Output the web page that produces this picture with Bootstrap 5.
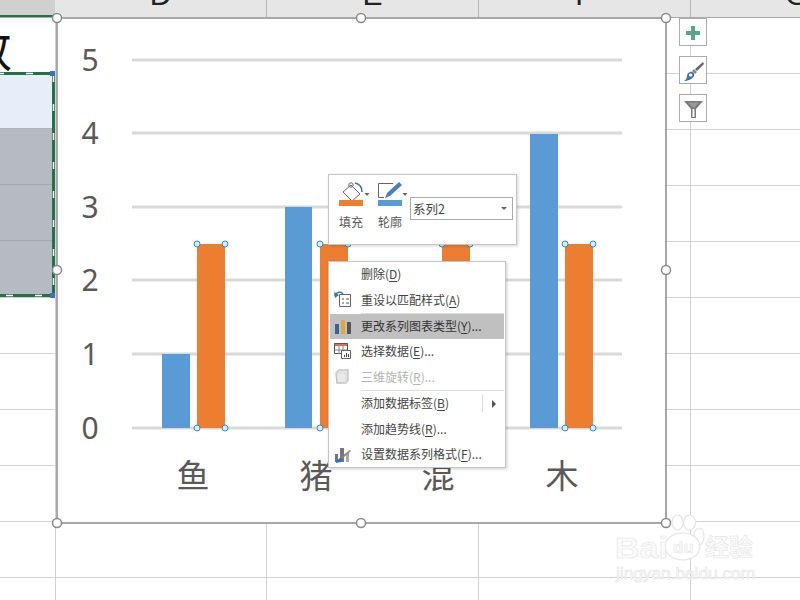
<!DOCTYPE html>
<html lang="zh">
<head>
<meta charset="utf-8">
<title>图表</title>
<link href="https://cdn.jsdelivr.net/npm/bootstrap@5.3.0/dist/css/bootstrap.min.css" rel="stylesheet">
<style>
html,body{margin:0;padding:0;width:800px;height:600px;overflow:hidden;background:#fff;}
body{font-family:"Noto Sans","Noto Sans CJK SC",sans-serif;color:#444;}
.xl-app{position:relative;width:800px;height:600px;overflow:hidden;}
.xl-head{height:18px;background:#e6e6e6;border-bottom:1px solid #ababab;overflow:hidden;}
.xl-col{height:17px;border-right:1px solid #b5b5b5;text-align:center;font:30px/30px "Liberation Sans",sans-serif;color:#222;flex:none;}
.xl-col span{display:block;margin-top:-20px;}
.xl-corner{width:55px;background:#d0d0d0;border-bottom:2px solid #217346;border-right:0;}
.w-a{width:212px}.w-b{width:212px}.w-c{width:212px}.w-d{width:212px;border-right:0;}
.xl-sheet{position:relative;height:582px;}
.xl-grid{position:absolute;left:0;top:0;}
.xl-left{position:relative;width:55px;flex:none;}
.xl-cell{height:56px;border-bottom:1px solid #c9c9c9;overflow:hidden;position:relative;}
.xl-title{height:55px;background:#fff;border-bottom:0;}
.xl-title span{display:block;width:50px;margin-left:-36px;font:48px/48px "Noto Sans CJK SC",sans-serif;color:#111;margin-top:4px;}
.xl-blue{background:#e6eef9;border-bottom-color:#b0b3b8;}
.xl-gray{background:#b6bac2;border-bottom-color:#a5a8ad;}
.xl-march{position:absolute;left:-3px;top:54px;width:57px;height:225px;overflow:visible;}
.xl-chart{position:absolute;left:0;top:0;}
.xl-chart text{font-family:"Noto Sans","Noto Sans CJK SC",sans-serif;fill:#595959;}
.xl-side{position:absolute;left:679px;top:18px;gap:10px;}
.xl-sbtn{width:28px;height:28px;background:#fff;border:1px solid #ababab;}
.xl-mini{position:absolute;left:328px;top:174px;width:189px;height:71px;background:#fff;border:1px solid #c6c6c6;box-shadow:1px 1px 3px rgba(0,0,0,.18);padding:6px 0 0 10px;font:12px/14px "Noto Sans CJK SC",sans-serif;color:#555;}
.xl-tool{width:39px;flex:none;}
.xl-tool svg{display:block;}
.xl-tool div{padding-top:8px;}
.xl-select{width:103px;height:23px;border:1px solid #ababab;margin:16px 0 0 -7px;padding:0 0 0 2px;font-size:12.5px;line-height:21px;color:#444;flex:none;}
.xl-caret{width:0;height:0;border-left:3px solid transparent;border-right:3px solid transparent;border-top:3px solid #666;margin-right:5px;}
.xl-menu{position:absolute;left:328px;top:261px;width:178px;height:207px;background:#fff;border:1px solid #c6c6c6;box-shadow:1px 1px 3px rgba(0,0,0,.2);padding:0 1px 0 1px;font:12px/16px "Noto Sans CJK SC",sans-serif;color:#444;}
.xl-item{height:25.4px;padding-left:31px;padding-bottom:1px;position:relative;white-space:nowrap;}
.xl-item u{text-underline-offset:2px;}
.xl-on{background:#c0c0c0;color:#333;}
.xl-off{color:#b4b4b4;}
.xl-ico{position:absolute;left:4px;top:3px;}
.xl-sep{height:1px;background:#dcdcdc;margin:0 0 0 31px;}
.xl-sub{position:absolute;left:152px;top:4px;height:17px;border-left:1px solid #dcdcdc;}
.xl-arrow{position:absolute;left:162px;top:9px;width:0;height:0;border-top:4px solid transparent;border-bottom:4px solid transparent;border-left:4px solid #555;}
.xl-wm{position:absolute;left:612px;top:512px;}
.xl-wm text{fill:#fafafa;stroke:#e6e6e6;stroke-width:.6;}
</style>
</head>
<body>
<div class="xl-app">
  <div class="xl-head d-flex">
    <div class="xl-col xl-corner"></div>
    <div class="xl-col w-a"><span>D</span></div>
    <div class="xl-col w-b"><span>E</span></div>
    <div class="xl-col w-c"><span>F</span></div>
    <div class="xl-col w-d"><span>G</span></div>
  </div>
  <div class="xl-sheet d-flex">
    <svg class="xl-grid" width="800" height="582" stroke="#d2d2d2" stroke-width="1">
      <path d="M55.500 0V582M266.500 0V582M478.500 0V582M690.500 0V582M0 55.500H800M0 111.500H800M0 167.500H800M0 223.500H800M0 279.500H800M0 335.500H800M0 391.500H800M0 447.500H800M0 503.500H800M0 559.500H800" fill="none"/>
    </svg>
    <div class="xl-left">
      <div class="xl-cell xl-title"><span>数</span></div>
      <div class="xl-cell xl-blue"></div>
      <div class="xl-cell xl-gray"></div>
      <div class="xl-cell xl-gray"></div>
      <div class="xl-cell xl-gray"></div>
      <svg class="xl-march" viewBox="0 0 57 225">
        <path d="M0 1.500H56.500V223.500H0" fill="none" stroke="#217346" stroke-width="3"/>
        <path d="M0 1.500H56.500V223.500H0" fill="none" stroke="#fff" stroke-width="1.500" stroke-dasharray="7 22"/>
        <rect x="53" y="-1" width="5" height="5" fill="#3f6fc0"/>
        <rect x="53" y="221" width="5" height="5" fill="#3f6fc0"/>
      </svg>
    </div>
  </div>

  <svg class="xl-chart" width="800" height="600" viewBox="0 0 800 600">
    <rect x="57" y="18" width="609" height="505" fill="#fff" stroke="#a8a8a8" stroke-width="2"/>
    <g stroke="#d9d9d9" stroke-width="3">
      <path d="M132 60H622M132 133H622M132 207H622M132 280H622M132 354H622M132 428H622"/>
    </g>
    <g font-size="30" text-anchor="middle">
      <text x="90" y="71">5</text><text x="90" y="144">4</text><text x="90" y="218">3</text><text x="90" y="291">2</text><text x="90" y="365">1</text><text x="90" y="439">0</text>
    </g>
    <g font-size="33" text-anchor="middle">
      <text x="193" y="488">鱼</text><text x="316" y="488">猪</text><text x="438" y="488">混</text><text x="562" y="488">木</text>
    </g>
    <g fill="#5b9bd5">
      <rect x="162" y="354" width="28" height="74"/><rect x="285" y="207" width="27" height="221"/><rect x="530" y="134" width="28" height="294"/>
    </g>
    <g fill="#ed7d31">
      <rect x="197" y="244" width="28" height="184"/><rect x="320" y="244" width="28" height="184"/><rect x="442" y="244" width="28" height="184"/><rect x="565" y="244" width="28" height="184"/>
    </g>
    <g fill="#d6ecfa" stroke="#2e8bc9" stroke-width="1">
      <circle cx="197" cy="244" r="3"/><circle cx="225" cy="244" r="3"/><circle cx="197" cy="428" r="3"/><circle cx="225" cy="428" r="3"/>
      <circle cx="320" cy="244" r="3"/><circle cx="348" cy="244" r="3"/><circle cx="320" cy="428" r="3"/>
      <circle cx="442" cy="244" r="3"/><circle cx="470" cy="244" r="3"/>
      <circle cx="565" cy="244" r="3"/><circle cx="593" cy="244" r="3"/><circle cx="565" cy="428" r="3"/><circle cx="593" cy="428" r="3"/>
    </g>
    <g fill="#fff" stroke="#8a8a8a" stroke-width="1.500">
      <circle cx="57" cy="18" r="4.500"/><circle cx="361" cy="18" r="4.500"/><circle cx="666" cy="18" r="4.500"/>
      <circle cx="57" cy="270" r="4.500"/><circle cx="666" cy="270" r="4.500"/>
      <circle cx="57" cy="523" r="4.500"/><circle cx="361" cy="523" r="4.500"/><circle cx="666" cy="523" r="4.500"/>
    </g>
  </svg>

  <div class="xl-side d-flex flex-column">
    <div class="xl-sbtn"><svg width="26" height="26" viewBox="0 0 26 26"><path d="M11 6h4v5h5v4h-5v5h-4v-5H6v-4h5z" fill="#5da58a"/></svg></div>
    <div class="xl-sbtn"><svg width="26" height="26" viewBox="0 0 26 26"><path d="M23 4l1 2-7 7-2-2z" fill="#666"/><path d="M14 11l3 3-2 2-3-3z" fill="#888"/><path d="M10 14c3-1 5 2 4 4-1 3-7 5-10 5 2-1 3-3 3-5 0-2 1-3 3-4z" fill="#3f6fb5"/><path d="M10 15.500c2-.5 3 1 2 2.500-1 1-3 .5-3-.5 0-1 0-1.500 1-2z" fill="#fff"/></svg></div>
    <div class="xl-sbtn"><svg width="26" height="26" viewBox="0 0 26 26"><path d="M4 5h19l-7 8v9h-5v-9z" fill="#7a7a7a"/><path d="M8 6.500h11l-4.500 5h-2z" fill="#9a9a9a"/><path d="M12.500 13h2v8h-2z" fill="#fff"/></svg></div>
  </div>

  <div class="xl-mini d-flex">
    <div class="xl-tool">
      <svg width="36" height="26" viewBox="0 0 36 26"><path d="M12 4l9 9-8 7-9-9z" fill="#fff" stroke="#666" stroke-width="1"/><circle cx="12" cy="4" r="2.200" fill="none" stroke="#666"/><path d="M16 2c4 1 7 4 7 9" fill="none" stroke="#3d6fa8" stroke-width="1.500"/><path d="M25.500 12h5l-2.500 3z" fill="#666"/><rect x="0" y="19" width="24" height="6" fill="#ed7d31"/></svg>
      <div>填充</div>
    </div>
    <div class="xl-tool">
      <svg width="36" height="26" viewBox="0 0 36 26"><path d="M0.500 16.500V2.500H15M0.500 16.500H6" fill="none" stroke="#666"/><path d="M21 1l3 3-12 11-5 2 2-5z" fill="#4a80bb"/><path d="M24.500 12h5l-2.500 3z" fill="#666"/><rect x="0" y="19" width="24" height="6" fill="#5b9bd5"/></svg>
      <div>轮廓</div>
    </div>
    <div class="xl-select d-flex align-items-center justify-content-between"><span>系列2</span><i class="xl-caret"></i></div>
  </div>

  <div class="xl-menu">
    <div class="xl-item d-flex align-items-center">删除(<u>D</u>)</div>
    <div class="xl-item d-flex align-items-center">
      <svg class="xl-ico" width="18" height="18" viewBox="0 0 18 18"><path d="M5.500 4.500H16.500V16.500H5.500z" fill="#fff" stroke="#666"/><path d="M8 9h2M8 13h2M12 9h3M12 13h3" stroke="#555"/><path d="M1 6c1-4 6-5 8-2" fill="none" stroke="#2e75b6" stroke-width="1.500"/><path d="M0 2l1 6 4-3z" fill="#2e75b6"/></svg>
      重设以匹配样式(<u>A</u>)
    </div>
    <div class="xl-sep"></div>
    <div class="xl-item xl-on d-flex align-items-center">
      <svg class="xl-ico" width="18" height="18" viewBox="0 0 18 18"><rect x="1" y="7" width="4" height="10" fill="#31659c"/><rect x="7" y="3" width="4" height="14" fill="#e8a33d"/><rect x="13" y="5" width="4" height="12" fill="#555"/></svg>
      更改系列图表类型(<u>Y</u>)...
    </div>
    <div class="xl-item d-flex align-items-center">
      <svg class="xl-ico" width="18" height="18" viewBox="0 0 18 18"><path d="M0.500 1.500h13v10H0.500z" fill="#fff" stroke="#555"/><path d="M1 2h12v2H1z" fill="#c77a55"/><path d="M5 4v8M9 4v8M1 8h12" stroke="#888"/><path d="M7.500 8.500h9v8h-9z" fill="#fff" stroke="#666"/><path d="M10.500 15v-2M12.500 15v-4M14.500 15v-3" stroke="#444"/></svg>
      选择数据(<u>E</u>)...
    </div>
    <div class="xl-item xl-off d-flex align-items-center">
      <svg class="xl-ico" width="18" height="18" viewBox="0 0 18 18"><path d="M2 5l3-3h9v10l-2 3H3z" fill="#e9e9e9" stroke="#c4c4c4" stroke-width="1.500"/><path d="M2 5h10v10" fill="none" stroke="#d6d6d6"/></svg>
      三维旋转(<u>R</u>)...
    </div>
    <div class="xl-sep"></div>
    <div class="xl-item d-flex align-items-center">添加数据标签(<u>B</u>)<i class="xl-sub"></i><i class="xl-arrow"></i></div>
    <div class="xl-item d-flex align-items-center">添加趋势线(<u>R</u>)...</div>
    <div class="xl-item d-flex align-items-center">
      <svg class="xl-ico" width="18" height="18" viewBox="0 0 18 18"><path d="M1 9h3v8H1zM6 3h4v14H6z" fill="#777"/><path d="M12 8h3v9h-3z" fill="#aaa"/><path d="M16 5l1 1-8 7-3 1 2-3z" fill="#888"/><path d="M2 16l4-3 3 1-2 3-5 1z" fill="#2e75b6"/></svg>
      设置数据系列格式(<u>F</u>)...
    </div>
  </div>

  <svg class="xl-wm" width="150" height="76" viewBox="0 0 150 76">
    <g fill="#fff" stroke="#e4e4e4" stroke-width="1.200">
      <ellipse cx="65.500" cy="10.500" rx="5.500" ry="7.500"/><ellipse cx="77.500" cy="10.500" rx="6" ry="7.500"/><ellipse cx="87" cy="24.500" rx="5" ry="8.500"/>
      <ellipse cx="70.500" cy="34.500" rx="17.500" ry="13.500"/>
    </g>
    <text x="3" y="46" font-family="Liberation Sans" font-size="29" font-weight="700" textLength="53" lengthAdjust="spacingAndGlyphs">Bai</text>
    <text x="61" y="41" font-family="Liberation Sans" font-size="17" font-weight="700">du</text>
    <text x="93" y="44" font-family="Noto Sans CJK SC" font-size="24" font-weight="700">经验</text>
    <text x="4" y="67" font-family="Liberation Sans" font-size="16" textLength="139" lengthAdjust="spacingAndGlyphs">jingyan.baidu.com</text>
  </svg>
</div>
<script src="https://cdn.jsdelivr.net/npm/bootstrap@5.3.0/dist/js/bootstrap.bundle.min.js"></script>
</body>
</html>
